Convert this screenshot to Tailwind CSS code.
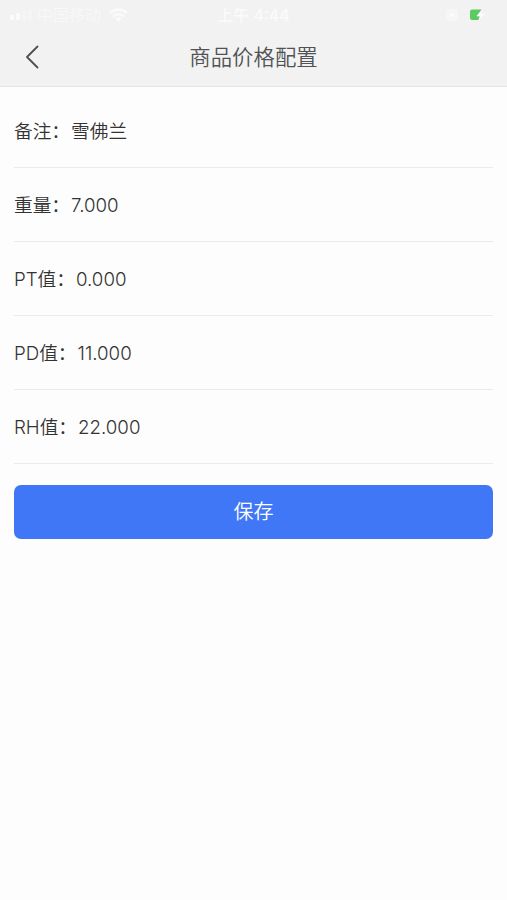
<!DOCTYPE html>
<html lang="zh-CN">
<head>
  <meta charset="UTF-8" />
  <title>商品价格配置</title>
  <meta name="viewport" content="width=device-width, initial-scale=1.0" />
  <script src="https://cdn.jsdelivr.net/npm/@tailwindcss/browser@4"></script>
  <style>
    body { font-family: Inter, 'Noto Sans CJK SC', sans-serif; }
  </style>
</head>

<body class="bg-[#fdfdfd] min-h-screen font-[350]">
<header class="h-[87px] bg-[#f2f2f2] border-b border-[#e4e4e4]">
  <!-- Status bar -->
  <div class="h-[29px] px-[10px] grid grid-cols-3 items-center text-[#fbfbfb] text-[15px] leading-none">
    <div class="flex items-center gap-1">
      <svg class="w-[23px] h-[11px]" viewBox="0 0 23 11" fill="currentColor">
        <rect x="0" y="6" width="4" height="5" rx="1" />
        <rect x="6" y="4" width="4" height="7" rx="1" />
        <rect x="12" y="2" width="4" height="9" rx="1" opacity=".3" />
        <rect x="18" y="0" width="4" height="11" rx="1" opacity=".3" />
      </svg>
      <span class="text-[#f8f8f8] text-[16px] whitespace-nowrap">中国移动</span>
      <svg class="w-[19px] h-[14px] ml-1 shrink-0" viewBox="0 0 19 14" fill="none" stroke="currentColor" stroke-width="2.6">
        <path d="M1 5Q9.500-2 18 5M4 8.500Q9.500 4 15 8.500" />
        <path d="M6.500 10.500Q9.500 8 12.500 10.500L9.500 14Z" fill="currentColor" stroke="none" />
      </svg>
    </div>
    <span class="text-center text-[16px] font-medium">上午 4:44</span>
    <div class="flex items-center justify-end gap-3 pr-[10px]">
      <svg class="w-3 h-3" viewBox="0 0 12 12">
        <rect width="12" height="12" rx="3" fill="#f6f6f6" />
        <circle cx="6" cy="6" r="2" fill="currentColor" />
      </svg>
      <svg class="w-[17px] h-[12px]" viewBox="0 0 17 12">
        <path d="M2 .5H11.500L7 7.500H10L8.500 11H2Q0 11 0 9V2.500Q0 .5 2 .5Z" fill="#5acb62" />
        <path d="M12 .5L6.500 7H10L8.500 11.500L15 4.500H11Z" fill="currentColor" />
      </svg>
    </div>
  </div>

  <!-- Nav bar -->
  <div class="h-[56px] px-[25px] grid grid-cols-[40px_1fr_40px] items-center">
    <button aria-label="返回">
      <svg class="w-[14px] h-[24px]" viewBox="0 0 14 24" fill="none" stroke="#505050" stroke-width="1.8" stroke-linecap="round" stroke-linejoin="round">
        <path d="M12.500 1.500L2 12L12.500 22.500" />
      </svg>
    </button>
    <h1 class="pt-px text-center text-[21.4px] leading-none font-[350] text-[#505255]">商品价格配置</h1>
  </div>
</header>

<main class="px-[14px] pt-[7px]">
  <div class="h-[74px] pt-1 flex items-center gap-px border-b border-[#ebebeb] text-[18.7px] text-[#333]">
    <span>备注：</span><span>雪佛兰</span>
  </div>
  <div class="h-[74px] pt-1 flex items-center gap-px border-b border-[#ebebeb] text-[18.7px] text-[#333]">
    <span>重量：</span><span>7.000</span>
  </div>
  <div class="h-[74px] pt-1 flex items-center gap-px border-b border-[#ebebeb] text-[18.7px] text-[#333]">
    <span>PT值：</span><span>0.000</span>
  </div>
  <div class="h-[74px] pt-1 flex items-center gap-px border-b border-[#ebebeb] text-[18.7px] text-[#333]">
    <span>PD值：</span><span>11.000</span>
  </div>
  <div class="h-[74px] pt-1 flex items-center gap-px border-b border-[#ebebeb] text-[18.7px] text-[#333]">
    <span>RH值：</span><span>22.000</span>
  </div>

  <button class="mt-[21px] w-full h-[54px] rounded-[7px] bg-[#4077f6] text-[20px] font-[350] text-white">保存</button>
</main>
</body>
</html>
